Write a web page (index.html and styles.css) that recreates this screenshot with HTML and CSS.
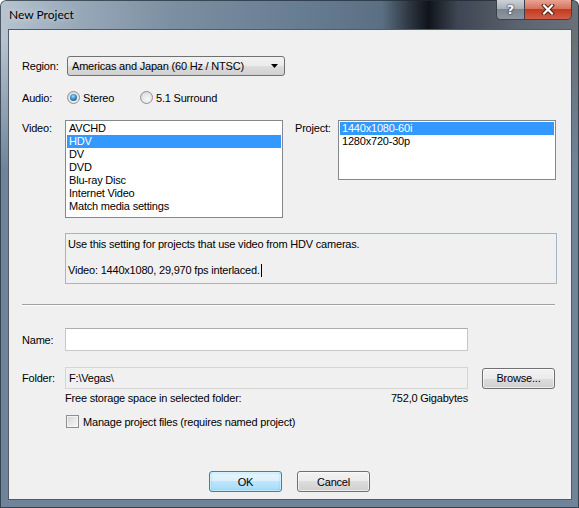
FILE: index.html
```html
<!DOCTYPE html>
<html lang="en">
<head>
  <meta charset="UTF-8">
  <title>New Project</title>
  <link rel="stylesheet" href="styles.css">
</head>
<body>

  <div class="window">
    <div class="titlebar">
      <span class="title">New Project</span>
      <div class="caption">
        <span class="cap-btn cap-help">?</span>
        <span class="cap-btn cap-close">
          <svg width="14" height="11" viewBox="0 0 14 11">
            <path d="M3 1.5 L11 9.5 M11 1.5 L3 9.5" stroke="#4a1a10" stroke-width="4" stroke-linecap="square"/>
            <path d="M3 1.5 L11 9.5 M11 1.5 L3 9.5" stroke="#fff" stroke-width="2.2" stroke-linecap="square"/>
          </svg>
        </span>
      </div>
    </div>

    <div class="client">
      <!-- Region -->
      <div class="field region-row">
        <span class="label">Region:</span>
        <div class="combo">
          <span>Americas and Japan (60 Hz / NTSC)</span>
          <svg width="7" height="4" viewBox="0 0 7 4"><path d="M0 0 H7 L3.5 4 Z" fill="#000"/></svg>
        </div>
      </div>

      <!-- Audio -->
      <div class="field audio-row">
        <span class="label">Audio:</span>
        <label class="option stereo"><span class="radio checked"></span>Stereo</label>
        <label class="option"><span class="radio"></span>5.1 Surround</label>
      </div>

      <!-- Video / Project templates -->
      <div class="field lists-row">
        <span class="label top">Video:</span>
        <div class="listbox video-list">
          <div class="item">AVCHD</div>
          <div class="item sel">HDV</div>
          <div class="item">DV</div>
          <div class="item">DVD</div>
          <div class="item">Blu-ray Disc</div>
          <div class="item">Internet Video</div>
          <div class="item">Match media settings</div>
        </div>
        <span class="label top project-label">Project:</span>
        <div class="listbox project-list">
          <div class="item sel">1440x1080-60i</div>
          <div class="item">1280x720-30p</div>
        </div>
      </div>

      <div class="description">
        <p>Use this setting for projects that use video from HDV cameras.</p>
        <p>Video: 1440x1080, 29,970 fps interlaced.<span class="caret"></span></p>
      </div>

      <div class="separator"></div>

      <!-- Name / folder -->
      <div class="field name-row">
        <span class="label">Name:</span>
        <div class="textbox"></div>
      </div>

      <div class="field folder-row">
        <span class="label">Folder:</span>
        <div class="textbox readonly">F:\Vegas\</div>
        <button class="btn browse">Browse...</button>
      </div>

      <div class="storage">
        <span>Free storage space in selected folder:</span>
        <span>752,0 Gigabytes</span>
      </div>

      <label class="check-row"><span class="checkbox"></span>Manage project files (requires named project)</label>

      <div class="buttons">
        <button class="btn default">OK</button>
        <button class="btn">Cancel</button>
      </div>
    </div>
  </div>

</body>
</html>
```

FILE: styles.css
```css
body {
  margin: 0;
  font-family: "Liberation Sans", Arial, sans-serif;
  font-size: 11px;
  letter-spacing: -0.2px;
  color: #000;
}
.window {
  width: 579px;
  height: 508px;
  box-sizing: border-box;
  padding: 0 7px 8px 8px;
  display: flex;
  flex-direction: column;
  border-radius: 6px 6px 0 0;
  box-shadow: inset 0 0 0 1px rgba(30, 40, 50, 0.7);
  background:
    linear-gradient(to bottom, rgba(111, 132, 153, 0) 40px, #6f8499 170px),
    linear-gradient(to right, #b8c4d0 0, #9aabba 12%, #7b8fa2 30%, #647a8f 55%, #5b6f83 66%, #2b333c 71%, #10151b 74%, #3d4652 79%, #5c646e 90%, #6b7178 100%);
}

/* title bar */
.titlebar {
  height: 29px;
  flex-shrink: 0;
  display: flex;
  justify-content: space-between;
  align-items: flex-start;
}
.title {
  padding: 8px 0 0 1px;
  font-family: Lato, sans-serif;
  font-size: 12px;
  line-height: 14px;
  letter-spacing: 0;
  color: #000;
  text-shadow: 0 0 6px rgba(255, 255, 255, 0.7);
}
.caption {
  display: flex;
  height: 19px;
  border: 1px solid #3a4149;
  border-top: none;
  border-radius: 0 0 5px 5px;
  overflow: hidden;
}
.cap-btn {
  display: flex;
  align-items: center;
  justify-content: center;
}
.cap-help {
  width: 27px;
  border-right: 1px solid #3a4149;
  background: linear-gradient(#cdd2d8 0, #a9b0b8 45%, #7d868f 50%, #8e979f 100%);
  color: #fff;
  font-family: "DejaVu Sans", sans-serif;
  font-weight: bold;
  font-size: 13px;
  text-shadow: 0 0 2px #222, 0 0 1px #222;
}
.cap-close {
  width: 46px;
  background: linear-gradient(#e9a393 0, #d7735c 45%, #c23b20 50%, #cf5f47 100%);
}

/* dialog body */
.client {
  flex: 1;
  display: flex;
  flex-direction: column;
  padding: 0 14px 7px 13px;
  background: #f0f0f0;
  border: 1px solid #4f5b68;
}
.field {
  display: flex;
  align-items: center;
}
.label {
  width: 43px;
  flex-shrink: 0;
}
.label.top {
  align-self: flex-start;
  padding-top: 2px;
}
.region-row {
  margin-top: 26px;
}
.combo {
  width: 218px;
  height: 20px;
  box-sizing: border-box;
  margin-left: 2px;
  padding: 0 6px 0 4px;
  display: flex;
  align-items: center;
  justify-content: space-between;
  border: 1px solid #707070;
  border-radius: 3px;
  background: linear-gradient(#f2f2f2 0, #ebebeb 50%, #dddddd 50%, #cfcfcf 100%);
}
.audio-row {
  margin-top: 15px;
  height: 13px;
}
.option {
  display: flex;
  align-items: center;
  margin-left: 2px;
}
.option.stereo {
  width: 71px;
}
.radio {
  width: 13px;
  height: 13px;
  box-sizing: border-box;
  margin-right: 3px;
  border: 1px solid #8e8f8f;
  border-radius: 50%;
  background: radial-gradient(circle at 60% 65%, #f7f7f7 0, #e6e6e6 50%, #cfcfcf 100%);
}
.radio.checked::after {
  content: "";
  display: block;
  width: 7px;
  height: 7px;
  margin: 2px;
  border-radius: 50%;
  background: radial-gradient(circle at 45% 35%, #a5dcf7 0, #3a8dc7 45%, #0f4670 100%);
}

/* template lists */
.lists-row {
  margin-top: 16px;
  align-items: flex-start;
}
.listbox {
  width: 218px;
  box-sizing: border-box;
  padding: 1px;
  border: 1px solid #828790;
  background: #fff;
}
.video-list {
  height: 98px;
}
.project-list {
  height: 60px;
}
.project-label {
  margin-left: 12px;
}
.item {
  height: 13px;
  line-height: 13px;
  padding-left: 2px;
  white-space: nowrap;
}
.item.sel {
  background: #3399ff;
  color: #fff;
}
.description {
  margin: 15px 0 0 43px;
  width: 492px;
  height: 51px;
  box-sizing: border-box;
  padding: 4px 2px 0;
  border: 1px solid #a7b4c5;
  background: #f0f0f0;
}
.description p {
  margin: 0 0 13px;
  line-height: 13px;
}
.caret {
  display: inline-block;
  width: 1px;
  height: 13px;
  margin-left: 1px;
  vertical-align: top;
  background: #000;
}
.separator {
  margin-top: 20px;
  width: 533px;
  border-top: 1px solid #a0a0a0;
  border-bottom: 1px solid #fff;
}
.name-row {
  margin-top: 22px;
}
.textbox {
  width: 403px;
  height: 23px;
  box-sizing: border-box;
  padding-left: 3px;
  line-height: 21px;
  border: 1px solid #c4c7cc;
  border-top-color: #abadb3;
  background: #fff;
}
.textbox.readonly {
  height: 22px;
  line-height: 20px;
  background: #f0f0f0;
  border-color: #d5d5d5;
}
.folder-row {
  margin-top: 16px;
}
.btn {
  height: 21px;
  width: 73px;
  padding: 0;
  font-family: "Liberation Sans", Arial, sans-serif;
  font-size: 11px;
  letter-spacing: -0.2px;
  color: #000;
  border: 1px solid #707070;
  border-radius: 3px;
  box-shadow: inset 0 0 0 1px rgba(255, 255, 255, 0.6);
  background: linear-gradient(#f2f2f2 0, #ebebeb 50%, #dddddd 50%, #cfcfcf 100%);
}
.btn.default {
  border-color: #3c7fb1;
  box-shadow: inset 0 0 0 1px rgba(255, 255, 255, 0.5), inset 0 0 3px #48c6f5;
  background: linear-gradient(#eaf6fd 0, #d9f0fc 50%, #bee6fd 50%, #a7d9f5 100%);
}
.browse {
  margin-left: 14px;
}
.storage {
  margin: 3px 0 0 43px;
  width: 403px;
  display: flex;
  justify-content: space-between;
  line-height: 13px;
}
.check-row {
  margin: 10px 0 0 44px;
  display: flex;
  align-items: center;
}
.checkbox {
  width: 13px;
  height: 13px;
  box-sizing: border-box;
  margin-right: 4px;
  border: 1px solid #8e8f8f;
  box-shadow: inset 0 0 0 1px #f4f4f4;
  background: linear-gradient(135deg, #cfd1d4 0, #e8e8e8 50%, #f7f7f7 100%);
}
.buttons {
  margin-top: auto;
  display: flex;
  justify-content: center;
  gap: 15px;
}
```
